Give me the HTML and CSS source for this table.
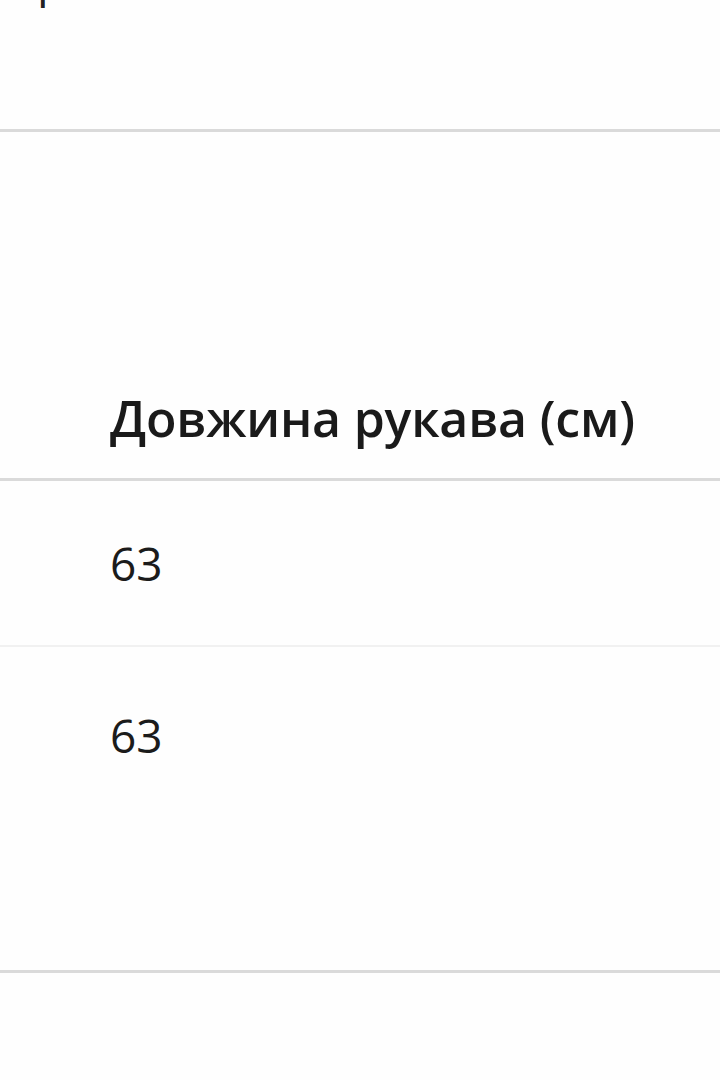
FILE: index.html
```html
<!DOCTYPE html>
<html lang="uk">
<head>
<meta charset="utf-8">
<link rel="stylesheet" href="styles.css">
<title>Таблиця розмірів</title>
</head>
<body>
<div class="table">
  <div class="row row-top"><span class="cut">р</span></div>
  <div class="row row-head"><span class="th">Довжина рукава (см)</span></div>
  <div class="row row-a"><span class="td">63</span></div>
  <div class="row row-b"><span class="td">63</span></div>
  <div class="row row-end"></div>
</div>
</body>
</html>
```
FILE: styles.css
```css
html, body {
  margin: 0;
  padding: 0;
  background: #fefefe;
}
body {
  width: 720px;
  height: 1080px;
  overflow: hidden;
  font-family: "Open Sans", "Noto Sans", sans-serif;
  color: #1b1b1b;
}
.table {
  display: flex;
  flex-direction: column;
}
.row {
  box-sizing: border-box;
  padding-left: 110px;
  overflow: hidden;
}
.row-top {
  height: 132px;
  border-bottom: 3px solid #dadada;
  padding-left: 37px;
}
.cut {
  display: block;
  font-size: 46px;
  line-height: 46px;
  margin-top: -44px;
  color: #222;
}
.row-head {
  height: 349px;
  border-bottom: 3px solid #dadada;
  display: flex;
  align-items: flex-end;
  padding-bottom: 35px;
}
.th {
  font-size: 50px;
  font-weight: 600;
  line-height: 1;
  letter-spacing: -0.2px;
  color: #1a1a1a;
}
.row-a {
  height: 166px;
  border-bottom: 2px solid #f1f1f1;
  padding-top: 55px;
}
.row-b {
  height: 326px;
  border-bottom: 3px solid #dadada;
  padding-top: 61px;
}
.td {
  display: block;
  font-size: 46px;
  line-height: 1.2;
  font-weight: 400;
  color: #1b1b1b;
}
.row-end {
  height: 107px;
}
```
